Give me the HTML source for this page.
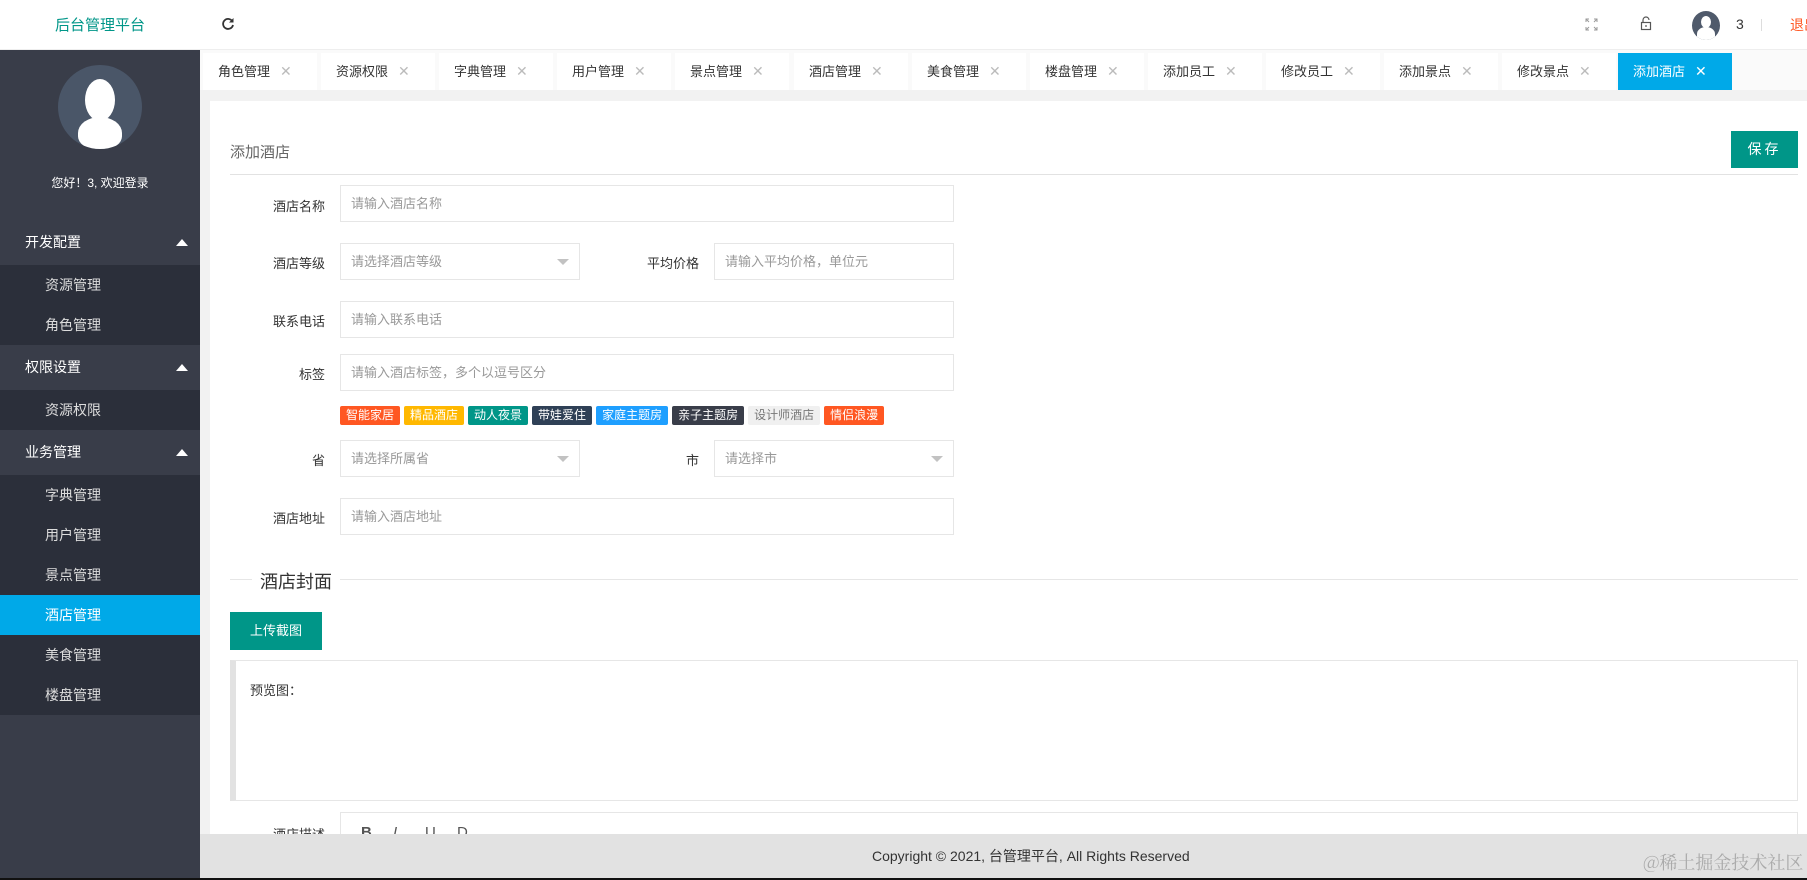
<!DOCTYPE html>
<html><head><meta charset="utf-8"><style>
*{margin:0;padding:0;box-sizing:border-box}
body{width:1807px;height:880px;overflow:hidden;background:#f2f2f2;font-family:"Liberation Sans","Noto Sans CJK SC",sans-serif;font-size:13px;color:#333;position:relative}
.abs{position:absolute}
#hdr{left:0;top:0;width:1807px;height:50px;background:#fff;border-bottom:1px solid #eee}
#side{left:0;top:50px;width:200px;height:828px;background:#393d49}
.grp{position:absolute;left:0;width:200px;height:45px;line-height:45px;padding-left:25px;color:#fff;font-size:14px;background:#393d49}
.grp:after{content:"";position:absolute;right:12px;top:19px;border-left:6px solid transparent;border-right:6px solid transparent;border-bottom:7px solid #fff}
.it{position:absolute;left:0;width:200px;height:40px;line-height:40px;padding-left:45px;color:#ddd;font-size:14px;background:#2b2f3a}
.tab{position:absolute;top:53px;width:114px;height:37px;line-height:37px;background:#fff;padding-left:15px;font-size:13px;color:#333}
.tab span{color:#bbb;margin-left:10px;font-size:14px}
.lbl{position:absolute;width:120px;text-align:right;font-size:13px;color:#333}
.inp{position:absolute;height:37px;border:1px solid #e6e6e6;background:#fff;line-height:35px;padding-left:10px;color:#999;font-size:13px}
.sel:after{content:"";position:absolute;right:10px;top:15px;border-left:6px solid transparent;border-right:6px solid transparent;border-top:6px solid #c2c2c2}
.tg{display:inline-block;height:19px;line-height:19px;padding:0 6px;color:#fff;font-size:12px;margin-right:4px;border-radius:2px}
</style></head><body>
<div id="hdr" class="abs">
 <div class="abs" style="left:0;top:14px;width:200px;text-align:center;color:#009688;font-size:15px">后台管理平台</div>
 <svg class="abs" style="left:221px;top:17px" width="14" height="14" viewBox="0 0 14 14"><path d="M11.5 4.5A5 5 0 1 0 12 8" fill="none" stroke="#333" stroke-width="1.8"/><path d="M12.5 1v4.5H8z" fill="#333"/></svg>
 <svg class="abs" style="left:1585px;top:18px" width="13" height="13" viewBox="0 0 13 13" fill="none" stroke="#999" stroke-width="1"><path d="M1 4V1h3M9 1h3v3M12 9v3H9M4 12H1V9M1 1l3 3M12 1L9 4M12 12L9 9M1 12l3-3"/></svg>
 <svg class="abs" style="left:1640px;top:16px" width="12" height="15" viewBox="0 0 12 15" fill="none" stroke="#555" stroke-width="1.2"><rect x="1.5" y="6.5" width="9" height="7"/><path d="M3 6.5V4a3 3 0 0 1 6 0"/><path d="M6 9v2"/></svg>
 <div class="abs" style="left:1692px;top:11px;width:28px;height:29px;border-radius:50%;background:#4f5a6b;overflow:hidden"><div class="abs" style="left:9px;top:5px;width:10px;height:12px;border-radius:50%;background:#fff"></div><div class="abs" style="left:5px;top:16px;width:18px;height:14px;border-radius:50% 50% 0 0;background:#fff"></div></div>
 <div class="abs" style="left:1736px;top:16px;font-size:14px;color:#333">3</div>
 <div class="abs" style="left:1761px;top:19px;width:1px;height:12px;background:#ddd"></div>
 <div class="abs" style="left:1790px;top:15px;font-size:14px;color:#ff5722;white-space:nowrap">退出</div>
</div>
<div id="side" class="abs">
 <div class="abs" style="left:58px;top:15px;width:84px;height:84px;border-radius:50%;background:#4a5668;overflow:hidden">
  <div class="abs" style="left:27px;top:14px;width:30px;height:42px;border-radius:50%;background:#fff"></div>
  <div class="abs" style="left:20px;top:52px;width:44px;height:32px;border-radius:50% 50% 40% 40%;background:#fff"></div>
 </div>
 <div class="abs" style="left:0;top:124px;width:200px;text-align:center;color:#fff;font-size:12px">您好！3, 欢迎登录</div>
</div>
<div class="grp" style="top:220px">开发配置</div>
<div class="it" style="top:265px">资源管理</div>
<div class="it" style="top:305px">角色管理</div>
<div class="grp" style="top:345px">权限设置</div>
<div class="it" style="top:390px">资源权限</div>
<div class="grp" style="top:430px">业务管理</div>
<div class="it" style="top:475px">字典管理</div>
<div class="it" style="top:515px">用户管理</div>
<div class="it" style="top:555px">景点管理</div>
<div class="it" style="top:595px;background:#00a9e8;color:#fff">酒店管理</div>
<div class="it" style="top:635px">美食管理</div>
<div class="it" style="top:675px">楼盘管理</div>

<div class="abs" style="left:200px;top:50px;width:1607px;height:40px;background:#fafafa"></div>
<div class="tab" style="left:203px">角色管理<span>✕</span></div>
<div class="tab" style="left:321px">资源权限<span>✕</span></div>
<div class="tab" style="left:439px">字典管理<span>✕</span></div>
<div class="tab" style="left:557px">用户管理<span>✕</span></div>
<div class="tab" style="left:675px">景点管理<span>✕</span></div>
<div class="tab" style="left:794px">酒店管理<span>✕</span></div>
<div class="tab" style="left:912px">美食管理<span>✕</span></div>
<div class="tab" style="left:1030px">楼盘管理<span>✕</span></div>
<div class="tab" style="left:1148px">添加员工<span>✕</span></div>
<div class="tab" style="left:1266px">修改员工<span>✕</span></div>
<div class="tab" style="left:1384px">添加景点<span>✕</span></div>
<div class="tab" style="left:1502px">修改景点<span>✕</span></div>
<div class="tab" style="left:1618px;background:#00a9e8;color:#fff">添加酒店<span style="color:#fff">✕</span></div>

<div class="abs" style="left:210px;top:101px;width:1597px;height:733px;background:#fff"></div>
<div class="abs" style="left:230px;top:141px;font-size:15px;color:#666">添加酒店</div>
<div class="abs" style="left:1731px;top:131px;width:67px;height:37px;background:#009688;color:#fff;font-size:14px;line-height:37px;text-align:center;letter-spacing:3px">保存</div>
<div class="abs" style="left:230px;top:174px;width:1568px;height:1px;background:#e2e2e2"></div>

<div class="lbl" style="left:205px;top:196px">酒店名称</div>
<div class="inp" style="left:340px;top:185px;width:614px">请输入酒店名称</div>
<div class="lbl" style="left:205px;top:253px">酒店等级</div>
<div class="inp sel" style="left:340px;top:243px;width:240px">请选择酒店等级</div>
<div class="lbl" style="left:579px;top:253px">平均价格</div>
<div class="inp" style="left:714px;top:243px;width:240px">请输入平均价格，单位元</div>
<div class="lbl" style="left:205px;top:311px">联系电话</div>
<div class="inp" style="left:340px;top:301px;width:614px">请输入联系电话</div>
<div class="lbl" style="left:205px;top:364px">标签</div>
<div class="inp" style="left:340px;top:354px;width:614px">请输入酒店标签，多个以逗号区分</div>
<div class="abs" style="left:340px;top:406px;white-space:nowrap">
<span class="tg" style="background:#ff5722">智能家居</span><span class="tg" style="background:#ffb800">精品酒店</span><span class="tg" style="background:#009688">动人夜景</span><span class="tg" style="background:#2f4056">带娃爱住</span><span class="tg" style="background:#1e9fff">家庭主题房</span><span class="tg" style="background:#393d49">亲子主题房</span><span class="tg" style="background:#f0f0f0;color:#777">设计师酒店</span><span class="tg" style="background:#ff5722">情侣浪漫</span>
</div>
<div class="lbl" style="left:205px;top:450px">省</div>
<div class="inp sel" style="left:340px;top:440px;width:240px">请选择所属省</div>
<div class="lbl" style="left:579px;top:450px">市</div>
<div class="inp sel" style="left:714px;top:440px;width:240px">请选择市</div>
<div class="lbl" style="left:205px;top:508px">酒店地址</div>
<div class="inp" style="left:340px;top:498px;width:614px">请输入酒店地址</div>

<div class="abs" style="left:230px;top:579px;width:1568px;height:1px;background:#e6e6e6"></div>
<div class="abs" style="left:252px;top:568px;padding:0 8px;background:#fff;font-size:18px;color:#333">酒店封面</div>
<div class="abs" style="left:230px;top:612px;width:92px;height:38px;background:#009688;color:#fff;font-size:13px;line-height:38px;text-align:center">上传截图</div>
<div class="abs" style="left:230px;top:660px;width:1568px;height:141px;border:1px solid #e6e6e6;border-left:6px solid #e2e2e2;background:#fff"></div>
<div class="abs" style="left:250px;top:680px;font-size:13px">预览图：</div>
<div class="lbl" style="left:205px;top:824px">酒店描述</div>
<div class="abs" style="left:340px;top:812px;width:1458px;height:40px;border:1px solid #e6e6e6;background:#fff;color:#555;font-size:15px">
 <span class="abs" style="left:20px;top:11px;font-weight:bold">B</span><span class="abs" style="left:52px;top:11px;font-style:italic">I</span><span class="abs" style="left:84px;top:11px">U</span><span class="abs" style="left:116px;top:11px">D</span>
</div>
<div class="abs" style="left:200px;top:834px;width:1607px;height:44px;background:#e2e2e2;line-height:44px;font-size:14px;color:#333"><span class="abs" style="left:672px;white-space:nowrap">Copyright © 2021, 台管理平台, All Rights Reserved</span></div>
<div class="abs" style="left:1643px;top:849px;font-size:18px;color:#aaa;font-family:'Noto Serif CJK SC',serif;white-space:nowrap">@稀土掘金技术社区</div>
<div class="abs" style="left:0;top:878px;width:1807px;height:2px;background:#111"></div>
</body></html>
